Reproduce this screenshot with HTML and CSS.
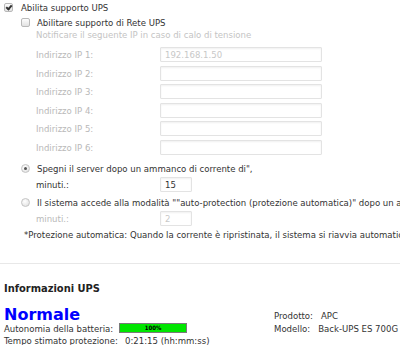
FILE: index.html
```html
<!DOCTYPE html>
<html lang="it">
<head>
  <meta charset="UTF-8" />
  <meta name="viewport" content="width=device-width, initial-scale=1.0"/>
  <title>Impostazioni UPS</title>
  <link rel="stylesheet" href="styles.css">
</head>
<body>
  <div class="opt top">
    <span class="check on"></span>
    <span>Abilita supporto UPS</span>
  </div>

  <div class="group">
    <div class="opt">
      <span class="check"></span>
      <span>Abilitare supporto di Rete UPS</span>
    </div>
    <div class="hint">Notificare il seguente IP in caso di calo di tensione</div>
    <div class="ips">
      <div class="field muted"><label>Indirizzo IP 1:</label><input class="wide" type="text" value="192.168.1.50" disabled></div>
      <div class="field muted"><label>Indirizzo IP 2:</label><input class="wide" type="text" disabled></div>
      <div class="field muted"><label>Indirizzo IP 3:</label><input class="wide" type="text" disabled></div>
      <div class="field muted"><label>Indirizzo IP 4:</label><input class="wide" type="text" disabled></div>
      <div class="field muted"><label>Indirizzo IP 5:</label><input class="wide" type="text" disabled></div>
      <div class="field muted"><label>Indirizzo IP 6:</label><input class="wide" type="text" disabled></div>
    </div>

    <div class="opt first-radio">
      <span class="radio on"></span>
      <span>Spegni il server dopo un ammanco di corrente di",</span>
    </div>
    <div class="field short-row"><label>minuti.:</label><input class="short" type="text" value="15"></div>

    <div class="opt second-radio">
      <span class="radio"></span>
      <span class="clip">Il sistema accede alla modalità ""auto-protection (protezione automatica)" dopo un ammanco di corrente di",</span>
    </div>
    <div class="field short-row muted"><label>minuti.:</label><input class="short" type="text" value="2" disabled></div>
  </div>

  <p class="note">*Protezione automatica: Quando la corrente è ripristinata, il sistema si riavvia automaticamente.</p>

  <hr>

  <h3>Informazioni UPS</h3>
  <div class="info">
    <div class="status">
      <div class="state">Normale</div>
      <div class="stat">
        <span class="stat-label">Autonomia della batteria:</span>
        <span class="bar"><span class="fill" style="width: 100%">100%</span></span>
      </div>
      <div class="stat">
        <span class="stat-label">Tempo stimato protezione:</span>
        <span class="stat-value">0:21:15 (hh:mm:ss)</span>
      </div>
    </div>
    <div class="product">
      <div class="prod-row"><span class="prod-label">Prodotto:</span><span>APC</span></div>
      <div class="prod-row"><span class="prod-label">Modello:</span><span>Back-UPS ES 700G</span></div>
    </div>
  </div>
</body>
</html>
```

FILE: styles.css
```css
html {
  overflow: hidden;
}

body {
  margin: 0;
  font-family: "DejaVu Sans Condensed", "DejaVu Sans", sans-serif;
  font-stretch: condensed;
  font-size: 9.5px;
  color: #333;
  background: #fff;
  white-space: nowrap;
}

.opt {
  display: flex;
  align-items: center;
  gap: 7px;
  height: 15px;
}

.top {
  padding-left: 4px;
  gap: 8px;
}

.group {
  padding-left: 21px;
}

.check {
  width: 7px;
  height: 7px;
  border: 1px solid #b9b9b9;
  border-radius: 2px;
  background: linear-gradient(#fdfdfd, #e2e2e2);
  position: relative;
  flex: none;
}

.check.on::after {
  content: "";
  position: absolute;
  left: 2px;
  top: 0;
  width: 2px;
  height: 4px;
  border: solid #333;
  border-width: 0 2px 2px 0;
  transform: rotate(40deg);
}

.radio {
  width: 7px;
  height: 7px;
  border: 1px solid #c4c4c4;
  border-radius: 50%;
  background: radial-gradient(circle at 40% 35%, #fff, #dcdcdc);
  position: relative;
  flex: none;
}

.radio.on::after {
  content: "";
  position: absolute;
  left: 2px;
  top: 2px;
  width: 3px;
  height: 3px;
  border-radius: 50%;
  background: #555;
}

.clip {
  overflow: hidden;
}

.hint {
  color: #c4c4c4;
  height: 10px;
  line-height: 10px;
  padding-left: 15px;
}

.ips {
  margin-top: 5.5px;
}

.field {
  display: flex;
  align-items: center;
  height: 18.5px;
}

.field label {
  width: 139px;
  padding-left: 15px;
  box-sizing: border-box;
}

.muted {
  color: #b9b9b9;
}

input {
  height: 15px;
  box-sizing: border-box;
  border: 1px solid #e3e3e3;
  border-radius: 1px;
  box-shadow: inset 0 1px 2px #f0f0f0;
  background: #fff;
  font: inherit;
  color: #333;
  padding: 0 4px;
  margin: 0;
}

input:disabled {
  color: #c8c8c8;
  background: #fff;
}

.wide {
  width: 162px;
}

.short {
  width: 32px;
}

.first-radio {
  margin-top: 4px;
}

.short-row {
  height: 18px;
}

.second-radio {
  margin-top: 1px;
}

.note {
  margin: 0;
  padding-left: 24px;
  height: 14px;
  line-height: 14px;
  margin-top: 0.5px;
  overflow: hidden;
}

hr {
  margin: 21px 0 0;
  border: none;
  border-top: 1px solid #e8e8e8;
}

h3 {
  margin: 18px 0 0;
  padding-left: 4px;
  font-size: 11px;
  font-weight: bold;
  color: #222;
  height: 14px;
  line-height: 14px;
}

.info {
  display: flex;
  padding-left: 4px;
  margin-top: 11px;
}

.status {
  flex: none;
  width: 270px;
}

.state {
  color: #0000ff;
  font-family: "DejaVu Sans", sans-serif;
  font-stretch: normal;
  font-weight: bold;
  font-size: 16px;
  height: 15px;
  line-height: 15px;
}

.stat {
  display: flex;
  align-items: center;
  height: 12px;
}

.stat-label {
  width: 115px;
}

.stat-value {
  margin-left: 6px;
}

.bar {
  width: 68px;
  height: 10px;
  box-sizing: border-box;
  border: 1px solid #7a7a7a;
  background: #fff;
  display: flex;
}

.fill {
  background: #00e600;
  color: #000;
  font-size: 6px;
  font-weight: bold;
  text-align: center;
  line-height: 8px;
}

.product {
  padding-top: 2px;
}

.prod-row {
  height: 13px;
  line-height: 13px;
}

.prod-label {
  margin-right: 8px;
}
```
